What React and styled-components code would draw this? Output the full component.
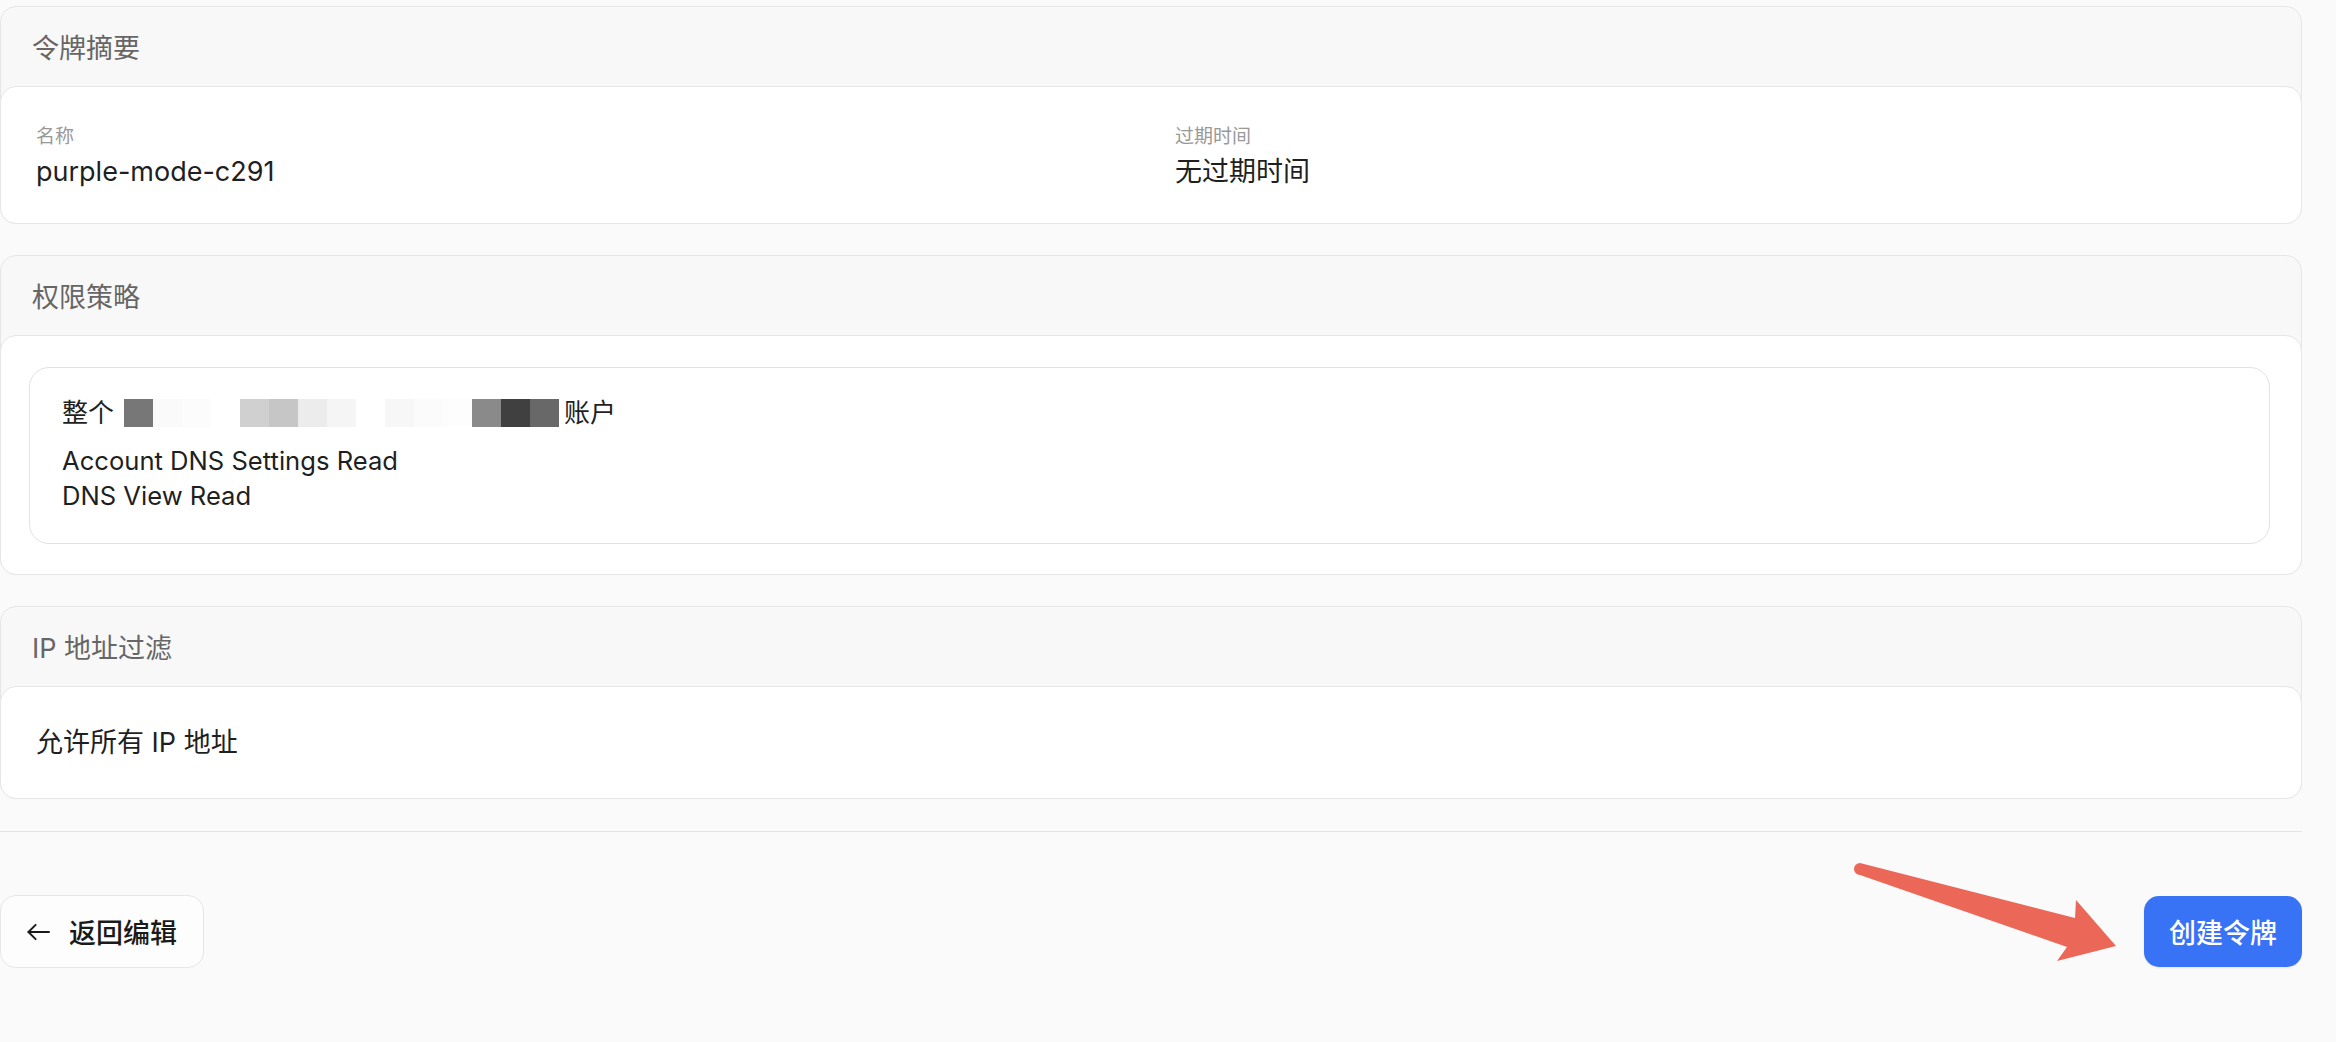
import React from 'react'
import styled, { createGlobalStyle } from 'styled-components'

const GlobalStyle = createGlobalStyle`
  html, body {
    margin: 0;
    background: #fafafa;
  }
  body {
    font-family: Inter, "Noto Sans CJK SC", sans-serif;
    color: #222;
    -webkit-font-smoothing: antialiased;
  }
  * { box-sizing: border-box; }
`

const Page = styled.div`
  position: relative;
  width: 2336px;
  min-height: 1042px;
  padding: 6px 34px 0 0;
`

const Stack = styled.div`
  display: flex;
  flex-direction: column;
  gap: 31px;
`

const Section = styled.section`
  border: 1px solid #e6e6e6;
  border-radius: 16px;
  background: #f8f8f8;
`

const SectionTitle = styled.div`
  height: 79px;
  display: flex;
  align-items: center;
  padding-left: 31px;
  font-size: 27px;
  color: #666;
`

const SectionBody = styled.div`
  margin: 0 -1px -1px;
  background: #fff;
  border: 1px solid #e6e6e6;
  border-radius: 16px;
  padding: ${(p) => p.pad};
`

const Grid = styled.div`
  display: grid;
  grid-template-columns: 1fr 1fr;
  column-gap: 48px;
`

const Label = styled.div`
  font-size: 19px;
  line-height: 26px;
  color: #999;
  margin-bottom: 4px;
`

const Value = styled.div`
  font-size: 27px;
  line-height: 36px;
  color: #1f1f1f;
`

const PolicyBox = styled.div`
  border: 1px solid #e2e2e2;
  border-radius: 20px;
  padding: 27px 32px 30px;
`

const AccountLine = styled.div`
  display: flex;
  align-items: center;
  font-size: 26px;
  line-height: 36px;
  margin-bottom: 12px;
  color: #1f1f1f;
`

const Mosaic = styled.div`
  display: flex;
  height: 28px;
  margin: 0 5px 0 10px;
`

const Cell = styled.span`
  width: 29px;
  height: 28px;
  background: ${(p) => p.c};
`

const Permission = styled.div`
  font-size: 25.6px;
  line-height: 35px;
  color: #1f1f1f;
`

const Divider = styled.hr`
  margin: 32px 0 0;
  border: 0;
  border-top: 1px solid #e4e4e4;
`

const Footer = styled.div`
  display: flex;
  justify-content: space-between;
  align-items: center;
  padding-top: 63px;
`

const BackButton = styled.button`
  height: 73px;
  display: flex;
  align-items: center;
  gap: 19px;
  padding: 0 26px;
  background: #fdfdfd;
  border: 1px solid #e6e6e6;
  border-radius: 16px;
  font-family: inherit;
  font-size: 27px;
  font-weight: 500;
  color: #1a1a1a;
`

const PrimaryButton = styled.button`
  height: 71px;
  padding: 0 25px;
  background: #3873f5;
  border: 0;
  border-radius: 15px;
  font-family: inherit;
  font-size: 27px;
  font-weight: 500;
  color: #fff;
  box-shadow: 0 1px 2px rgba(0, 0, 0, 0.08);
`

const Pointer = styled.svg`
  position: absolute;
  left: 1850px;
  top: 855px;
  pointer-events: none;
`

const mosaic = [
  '#777', '#fafafa', '#fcfcfc', '#fff', '#d0d0d0',
  '#c6c6c6', '#ececec', '#f5f5f5', '#fff', '#f7f7f7',
  '#fbfbfb', '#fdfdfd', '#8a8a8a', '#404040', '#686868',
]

function BackArrow() {
  return (
    <svg width="23" height="18" viewBox="0 0 24 18" fill="none" stroke="#1a1a1a" strokeWidth="2" strokeLinecap="round" strokeLinejoin="round">
      <path d="M23 9H1.5" />
      <path d="M9 1.5 1.5 9 9 16.5" />
    </svg>
  )
}

export default function App() {
  return (
    <Page>
      <GlobalStyle />
      <Stack>
        <Section>
          <SectionTitle>令牌摘要</SectionTitle>
          <SectionBody pad="37px 35px 33px">
            <Grid>
              <div>
                <Label>名称</Label>
                <Value>purple-mode-c291</Value>
              </div>
              <div>
                <Label>过期时间</Label>
                <Value>无过期时间</Value>
              </div>
            </Grid>
          </SectionBody>
        </Section>

        <Section>
          <SectionTitle>权限策略</SectionTitle>
          <SectionBody pad="31px 31px 30px 28px">
            <PolicyBox>
              <AccountLine>
                整个
                <Mosaic>
                  {mosaic.map((c, i) => <Cell key={i} c={c} />)}
                </Mosaic>
                账户
              </AccountLine>
              <Permission>Account DNS Settings Read</Permission>
              <Permission>DNS View Read</Permission>
            </PolicyBox>
          </SectionBody>
        </Section>

        <Section>
          <SectionTitle>IP 地址过滤</SectionTitle>
          <SectionBody pad="38px 35px 37px">
            <Value>允许所有 IP 地址</Value>
          </SectionBody>
        </Section>
      </Stack>

      <Divider />

      <Footer>
        <BackButton>
          <BackArrow />
          返回编辑
        </BackButton>
        <PrimaryButton>创建令牌</PrimaryButton>
      </Footer>

      <Pointer width="270" height="110" viewBox="0 0 270 110">
        <path
          d="M10 8 L225 63 L226 45 L266 91 L207 106 L217 92 L10 20 A6 6 0 0 1 10 8 Z"
          fill="#eb6859"
        />
      </Pointer>
    </Page>
  )
}
